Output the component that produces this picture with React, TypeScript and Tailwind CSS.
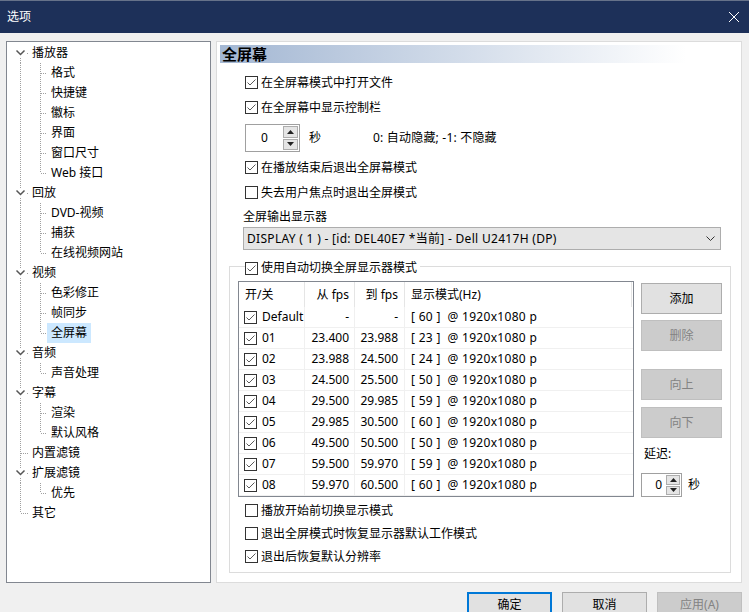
import React from 'react';

type TreeNode = { label: string; children?: string[] };

const tree: TreeNode[] = [
  { label: '播放器', children: ['格式', '快捷键', '徽标', '界面', '窗口尺寸', 'Web 接口'] },
  { label: '回放', children: ['DVD-视频', '捕获', '在线视频网站'] },
  { label: '视频', children: ['色彩修正', '帧同步', '全屏幕'] },
  { label: '音频', children: ['声音处理'] },
  { label: '字幕', children: ['渲染', '默认风格'] },
  { label: '内置滤镜' },
  { label: '扩展滤镜', children: ['优先'] },
  { label: '其它' },
];

const modes = [
  ['Default', '-', '-', '[ 60 ]'],
  ['01', '23.400', '23.988', '[ 23 ]'],
  ['02', '23.988', '24.500', '[ 24 ]'],
  ['03', '24.500', '25.500', '[ 50 ]'],
  ['04', '29.500', '29.985', '[ 59 ]'],
  ['05', '29.985', '30.500', '[ 60 ]'],
  ['06', '49.500', '50.500', '[ 50 ]'],
  ['07', '59.500', '59.970', '[ 59 ]'],
  ['08', '59.970', '60.500', '[ 60 ]'],
];

const DOT = '#a0a0a0';

const Check: React.FC<{ checked?: boolean }> = ({ checked }) => (
  <span className="w-[13px] h-[13px] border border-[#333333] bg-white flex items-center justify-center shrink-0">
    {checked && (
      <svg width="11" height="11" viewBox="0 0 11 11">
        <path d="M1.5 5.5 L4 8 L9.5 2.5" fill="none" stroke="#5a5a5a" strokeWidth="1" />
      </svg>
    )}
  </span>
);

const CheckRow: React.FC<{ checked?: boolean; label: string; h: string }> = ({ checked, label, h }) => (
  <div className={`${h} flex items-center gap-[3px]`}>
    <Check checked={checked} />
    <span className="leading-[16px]">{label}</span>
  </div>
);

const Arrow: React.FC<{ up?: boolean }> = ({ up }) => (
  <svg width="7" height="4" viewBox="0 0 7 4">
    {up ? <path d="M0 4 L3.5 0 L7 4 Z" fill="#222" /> : <path d="M0 0 L3.5 4 L7 0 Z" fill="#222" />}
  </svg>
);

const Spinner: React.FC<{ box: string; btn: string; align: string }> = ({ box, btn, align }) => (
  <div className={`${box} border border-[#a0a0a0] bg-white flex`}>
    <div className={`flex-1 flex items-center ${align}`}>0</div>
    <div className={`${btn} flex flex-col gap-[1px] p-[1px] pl-0`}>
      <div className="flex-1 bg-[#e5e5e5] border border-[#adadad] flex items-center justify-center">
        <Arrow up />
      </div>
      <div className="flex-1 bg-[#e5e5e5] border border-[#adadad] flex items-center justify-center">
        <Arrow />
      </div>
    </div>
  </div>
);

const Dotted: React.FC<{ x1: number; y1: number; x2: number; y2: number }> = (p) => (
  <line {...p} stroke={DOT} strokeWidth="1" strokeDasharray="1 1" shapeRendering="crispEdges" />
);

const RootRow: React.FC<{ node: TreeNode; first: boolean; last: boolean }> = ({ node, first, last }) => {
  const hasKids = !!node.children;
  return (
    <div className="h-[20px] flex items-center">
      <svg width="21" height="20" viewBox="0 0 21 20" className="shrink-0">
        {hasKids ? (
          <>
            {!first && <Dotted x1={13.5} y1={0} x2={13.5} y2={6} />}
            <Dotted x1={13.5} y1={15} x2={13.5} y2={20} />
            <path d="M9.5 7.5 L13.5 11.5 L17.5 7.5" fill="none" stroke="#555555" strokeWidth="1.5" />
            <rect x="20" y="10" width="1" height="1" fill={DOT} />
          </>
        ) : (
          <>
            <Dotted x1={13.5} y1={0} x2={13.5} y2={last ? 10 : 20} />
            <Dotted x1={14} y1={10.5} x2={21} y2={10.5} />
          </>
        )}
      </svg>
      <span className="px-[4px] leading-[16px]">{node.label}</span>
    </div>
  );
};

const ChildRow: React.FC<{ label: string; last: boolean; selected: boolean }> = ({ label, last, selected }) => (
  <div className="h-[20px] flex items-center">
    <svg width="40" height="20" viewBox="0 0 40 20" className="shrink-0">
      <Dotted x1={13.5} y1={0} x2={13.5} y2={20} />
      <Dotted x1={33.5} y1={0} x2={33.5} y2={last ? 10 : 20} />
      <Dotted x1={34} y1={10.5} x2={40} y2={10.5} />
    </svg>
    <span className={`h-[20px] px-[4px] flex items-center ${selected ? 'bg-[#cce8ff]' : ''}`}>{label}</span>
  </div>
);

const Button: React.FC<{ label: string; disabled?: boolean; className?: string }> = ({ label, disabled, className }) => (
  <div
    className={`flex items-center justify-center border ${
      disabled ? 'bg-[#cccccc] border-[#bfbfbf] text-[#838383]' : 'bg-[#e1e1e1] border-[#adadad] text-black'
    } ${className ?? ''}`}
  >
    {label}
  </div>
);

export default function App() {
  return (
    <div className="w-[749px] h-[612px] overflow-hidden bg-[#f0f0f0] text-black text-[12px] [font-family:'Noto_Sans','Noto_Sans_CJK_SC',sans-serif]">
      {/* title bar */}
      <div className="h-[33px] border-t border-[#66728a] bg-[#1d3059] flex items-center justify-between pl-[7px] pr-[9px] text-white">
        <span className="leading-[16px]">选项</span>
        <svg width="12" height="12" viewBox="0 0 12 12">
          <path d="M1 1 L11 11 M11 1 L1 11" stroke="#ffffff" strokeWidth="1" />
        </svg>
      </div>

      <div className="flex mt-[8px] pl-[6px] gap-[5px]">
        {/* tree */}
        <div className="w-[205px] h-[542px] border border-[#828790] bg-white pt-[1px]">
          {tree.map((node, i) => (
            <React.Fragment key={node.label}>
              <RootRow node={node} first={i === 0} last={i === tree.length - 1} />
              {node.children?.map((c, j) => (
                <ChildRow key={c} label={c} last={j === node.children!.length - 1} selected={c === '全屏幕'} />
              ))}
            </React.Fragment>
          ))}
        </div>

        {/* settings page */}
        <div className="w-[526px] h-[542px] border border-[#dcdcdc] bg-white">
          <div className="mx-[3px] mt-[3px] h-[18px] pl-[2px] flex items-center font-bold text-[15px] bg-[linear-gradient(to_right,#a3b7d3,#ffffff_90%)]">
            全屏幕
          </div>

          <div className="pl-[28px] mt-[7px]">
            <CheckRow h="h-[25px]" checked label="在全屏幕模式中打开文件" />
            <CheckRow h="h-[25px]" checked label="在全屏幕中显示控制栏" />
            <div className="mt-[4px] h-[28px] flex items-center">
              <Spinner box="w-[55px] h-[28px]" btn="w-[16px]" align="justify-center" />
              <span className="ml-[9px]">秒</span>
              <span className="ml-[52px] tracking-[0.2px]">0: 自动隐藏; -1: 不隐藏</span>
            </div>
            <div className="mt-[3px]">
              <CheckRow h="h-[25px]" checked label="在播放结束后退出全屏幕模式" />
              <CheckRow h="h-[25px]" label="失去用户焦点时退出全屏模式" />
            </div>
          </div>

          <div className="ml-[26px] mt-[4px] h-[16px] flex items-center">全屏输出显示器</div>
          <div className="ml-[26px] mt-[2px] w-[478px] h-[23px] bg-[#e5e5e5] border border-[#adadad] flex items-center justify-between pl-[3px] pr-[5px]">
            <span className="tracking-[0.3px]">DISPLAY ( 1 ) - [id: DEL40E7 *当前] - Dell U2417H (DP)</span>
            <svg width="9" height="5" viewBox="0 0 9 5">
              <path d="M0.5 0.5 L4.5 4.5 L8.5 0.5" fill="none" stroke="#333" strokeWidth="1" />
            </svg>
          </div>

          {/* group box */}
          <div className="relative ml-[12px] mt-[16px] w-[502px] border border-[#dcdcdc] pt-[14px] pb-[4px]">
            <div className="absolute left-[15px] -top-[7px] h-[16px] bg-white pr-[3px] flex items-center gap-[3px]">
              <Check checked />
              <span className="leading-[16px]">使用自动切换全屏显示器模式</span>
            </div>

            <div className="flex">
              {/* list */}
              <div className="ml-[8px] w-[396px] h-[216px] border border-[#828790] bg-white">
                <div className="h-[25px] flex">
                  <div className="w-[66px] border-r border-[#e5e5e5] pl-[6px] flex items-center">开/关</div>
                  <div className="w-[50px] border-r border-[#e5e5e5] pr-[5px] flex items-center justify-end">从 fps</div>
                  <div className="w-[50px] border-r border-[#e5e5e5] pr-[6px] flex items-center justify-end">到 fps</div>
                  <div className="w-[227px] border-r border-[#e5e5e5] pl-[6px] flex items-center">显示模式(Hz)</div>
                </div>
                {modes.map((m) => (
                  <div key={m[0]} className="h-[21px] flex border-b border-[#f0f0f0]">
                    <div className="w-[66px] border-r border-[#f0f0f0] pl-[5px] flex items-center gap-[5px]">
                      <Check checked />
                      <span>{m[0]}</span>
                    </div>
                    <div className="w-[50px] border-r border-[#f0f0f0] pr-[5px] flex items-center justify-end">{m[1]}</div>
                    <div className="w-[50px] border-r border-[#f0f0f0] pr-[6px] flex items-center justify-end">{m[2]}</div>
                    <div className="w-[227px] pl-[6px] flex items-center whitespace-pre tracking-[0.3px]">{`${m[3]}  @ 1920x1080 p`}</div>
                  </div>
                ))}
              </div>

              {/* side buttons */}
              <div className="ml-[7px] w-[81px] flex flex-col">
                <Button label="添加" className="mt-[2px] h-[31px]" />
                <Button label="删除" disabled className="mt-[6px] h-[31px]" />
                <Button label="向上" disabled className="mt-[18px] h-[31px]" />
                <Button label="向下" disabled className="mt-[7px] h-[31px]" />
                <div className="mt-[8px] h-[16px] pl-[3px] flex items-center">延迟:</div>
                <div className="mt-[11px] flex items-center gap-[6px]">
                  <Spinner box="w-[41px] h-[24px]" btn="w-[15px]" align="justify-end pr-[4px]" />
                  <span>秒</span>
                </div>
              </div>
            </div>

            <div className="pl-[15px] mt-[2px]">
              <CheckRow h="h-[23px]" label="播放开始前切换显示模式" />
              <CheckRow h="h-[23px]" label="退出全屏模式时恢复显示器默认工作模式" />
              <CheckRow h="h-[23px]" checked label="退出后恢复默认分辨率" />
            </div>
          </div>
        </div>
      </div>

      {/* dialog buttons */}
      <div className="mt-[9px] flex justify-end gap-[10px] pr-[7px]">
        <div className="w-[85px] h-[25px] bg-[#e1e1e1] border-2 border-[#0078d7] flex items-center justify-center">确定</div>
        <Button label="取消" className="w-[85px] h-[25px]" />
        <Button label="应用(A)" disabled className="w-[85px] h-[25px]" />
      </div>
    </div>
  );
}
